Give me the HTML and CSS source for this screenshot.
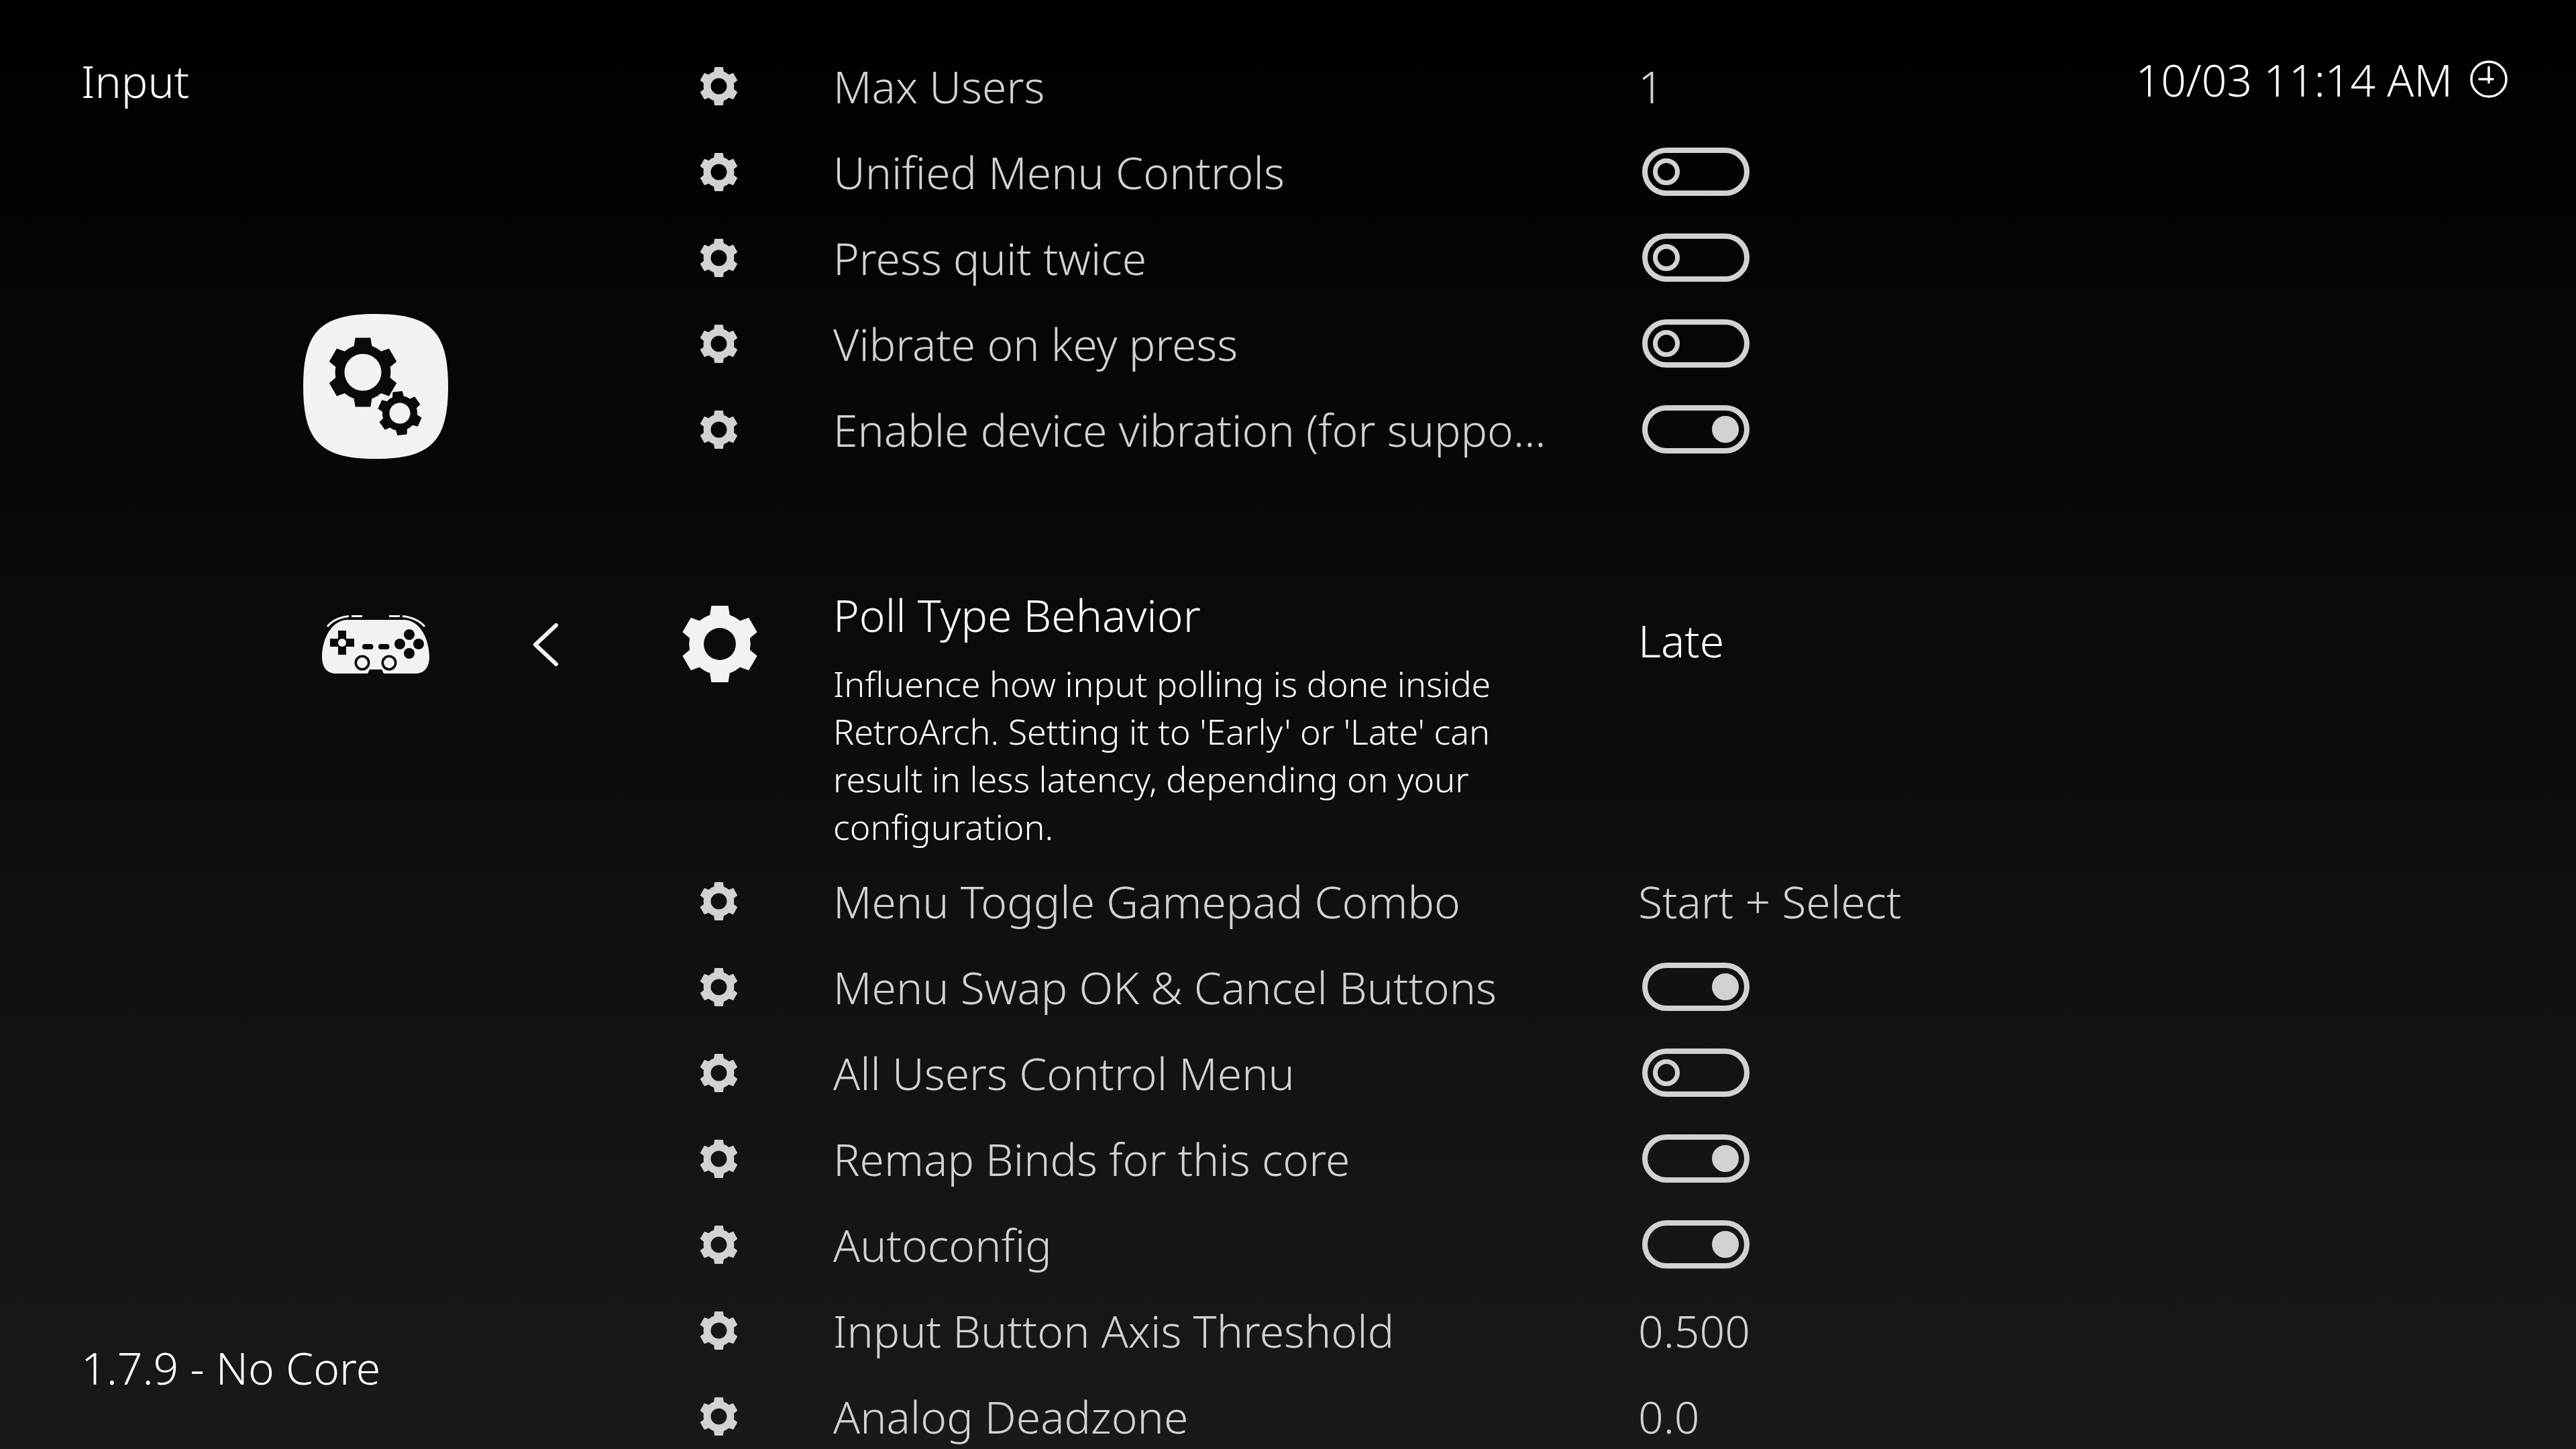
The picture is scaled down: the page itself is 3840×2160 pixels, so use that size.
FILE: index.html
```html
<!DOCTYPE html>
<html lang="en">
<head>
    <meta charset="UTF-8">
    <title>Input</title>
    <link rel="stylesheet" href="styles.css">
</head>
<body>

    <!-- reusable gear -->
    <svg class="defs" width="0" height="0">
        <defs>
            <path id="gear" fill-rule="evenodd" d="M-13 -38 L-11 -50 L11 -50 L13 -38 A40 40 0 0 1 26.4 -30.3 L37.8 -34.5 L48.8 -15.5 L39.4 -7.7 A40 40 0 0 1 39.4 7.7 L48.8 15.5 L37.8 34.5 L26.4 30.3 A40 40 0 0 1 13 38 L11 50 L-11 50 L-13 38 A40 40 0 0 1 -26.4 30.3 L-37.8 34.5 L-48.8 15.5 L-39.4 7.7 A40 40 0 0 1 -39.4 -7.7 L-48.8 -15.5 L-37.8 -34.5 L-26.4 -30.3 A40 40 0 0 1 -13 -38 Z M0 -21 A21 21 0 1 0 0 21 A21 21 0 1 0 0 -21 Z"/>
        </defs>
    </svg>

    <div class="screen">

        <!-- Left side -->
        <aside class="side">
            <div class="side-title">Input</div>

            <div class="app-icon">
                <svg viewBox="0 0 216 216" width="216" height="216">
                    <path d="M108 0 C190 0 216 26 216 108 C216 190 190 216 108 216 C26 216 0 190 0 108 C0 26 26 0 108 0 Z" fill="#f2f2f2"/>
                    <use href="#gear" transform="translate(89 87) scale(1.03)" fill="#0a0a0a"/>
                    <circle cx="89" cy="87" r="27.500" fill="#f2f2f2"/>
                    <use href="#gear" transform="translate(144 148) rotate(-6) scale(0.65)" fill="#0a0a0a"/>
                    <circle cx="144" cy="148" r="15.500" fill="#f2f2f2"/>
                </svg>
            </div>

            <div class="side-nav">
                <svg class="pad" viewBox="0 0 160 88" width="160" height="88">
                    <path d="M8 17 Q18 4 40 1.500 M44 1.500 H60 M100 1.500 H116 M120 1.500 Q142 4 153 17" fill="none" stroke="#f2f2f2" stroke-width="3"/>
                    <path d="M38 7 H122 C146 7 160 36 160 62 C160 78 152 87 140 87 H92 L89 81 H71 L68 87 H20 C8 87 0 78 0 62 C0 36 14 7 38 7 Z" fill="#f2f2f2"/>
                    <path d="M24 23 H36 V35 H48 V47 H36 V59 H24 V47 H12 V35 H24 Z" fill="#0a0a0a"/>
                    <circle cx="30" cy="41" r="6" fill="#f2f2f2"/>
                    <rect x="60" y="43" width="16.500" height="8" rx="4" fill="#0a0a0a"/>
                    <rect x="84" y="43" width="16.500" height="8" rx="4" fill="#0a0a0a"/>
                    <circle cx="116" cy="43" r="8" fill="#0a0a0a"/>
                    <circle cx="144" cy="43" r="8" fill="#0a0a0a"/>
                    <circle cx="130" cy="29" r="8" fill="#0a0a0a"/>
                    <circle cx="130" cy="57" r="8" fill="#0a0a0a"/>
                    <circle cx="60" cy="71" r="9.700" fill="#f2f2f2" stroke="#0a0a0a" stroke-width="3.600"/>
                    <circle cx="100" cy="71" r="9.700" fill="#f2f2f2" stroke="#0a0a0a" stroke-width="3.600"/>
                </svg>
                <svg class="chevron" viewBox="0 0 38 64" width="38" height="64">
                    <path d="M34 3 L3 32 L34 61" fill="none" stroke="#f2f2f2" stroke-width="6" stroke-linecap="round" stroke-linejoin="round"/>
                </svg>
            </div>

            <div class="side-version">1.7.9 - No Core</div>
        </aside>

        <!-- Settings list -->
        <main class="list">
            <div class="row">
                <svg class="row-icon" viewBox="-50 -50 100 100"><use href="#gear"/></svg>
                <span class="row-label">Max Users</span>
                <span class="row-value">1</span>
            </div>
            <div class="row">
                <svg class="row-icon" viewBox="-50 -50 100 100"><use href="#gear"/></svg>
                <span class="row-label">Unified Menu Controls</span>
                <span class="toggle"></span>
            </div>
            <div class="row">
                <svg class="row-icon" viewBox="-50 -50 100 100"><use href="#gear"/></svg>
                <span class="row-label">Press quit twice</span>
                <span class="toggle"></span>
            </div>
            <div class="row">
                <svg class="row-icon" viewBox="-50 -50 100 100"><use href="#gear"/></svg>
                <span class="row-label">Vibrate on key press</span>
                <span class="toggle"></span>
            </div>
            <div class="row">
                <svg class="row-icon" viewBox="-50 -50 100 100"><use href="#gear"/></svg>
                <span class="row-label">Enable device vibration (for suppo...</span>
                <span class="toggle on"></span>
            </div>

            <!-- Selected item -->
            <div class="row selected">
                <svg class="row-icon" viewBox="-50 -50 100 100"><use href="#gear"/></svg>
                <div class="row-text">
                    <span class="row-label">Poll Type Behavior</span>
                    <p class="row-desc">Influence how input polling is done inside<br>RetroArch. Setting it to 'Early' or 'Late' can<br>result in less latency, depending on your<br>configuration.</p>
                </div>
                <span class="row-value">Late</span>
            </div>

            <div class="row">
                <svg class="row-icon" viewBox="-50 -50 100 100"><use href="#gear"/></svg>
                <span class="row-label">Menu Toggle Gamepad Combo</span>
                <span class="row-value">Start + Select</span>
            </div>
            <div class="row">
                <svg class="row-icon" viewBox="-50 -50 100 100"><use href="#gear"/></svg>
                <span class="row-label">Menu Swap OK &amp; Cancel Buttons</span>
                <span class="toggle on"></span>
            </div>
            <div class="row">
                <svg class="row-icon" viewBox="-50 -50 100 100"><use href="#gear"/></svg>
                <span class="row-label">All Users Control Menu</span>
                <span class="toggle"></span>
            </div>
            <div class="row">
                <svg class="row-icon" viewBox="-50 -50 100 100"><use href="#gear"/></svg>
                <span class="row-label">Remap Binds for this core</span>
                <span class="toggle on"></span>
            </div>
            <div class="row">
                <svg class="row-icon" viewBox="-50 -50 100 100"><use href="#gear"/></svg>
                <span class="row-label">Autoconfig</span>
                <span class="toggle on"></span>
            </div>
            <div class="row">
                <svg class="row-icon" viewBox="-50 -50 100 100"><use href="#gear"/></svg>
                <span class="row-label">Input Button Axis Threshold</span>
                <span class="row-value">0.500</span>
            </div>
            <div class="row">
                <svg class="row-icon" viewBox="-50 -50 100 100"><use href="#gear"/></svg>
                <span class="row-label">Analog Deadzone</span>
                <span class="row-value">0.0</span>
            </div>
        </main>

        <!-- Clock -->
        <div class="clock">
            <span>10/03 11:14 AM</span>
            <svg viewBox="0 0 56 56" width="56" height="56">
                <circle cx="28" cy="28" r="26" fill="none" stroke="#fff" stroke-width="3.500"/>
                <path d="M28 10 V33 M14 28 H34" fill="none" stroke="#fff" stroke-width="3.500" stroke-linecap="round"/>
            </svg>
        </div>
    </div>

</body>
</html>
```

FILE: styles.css
```css
body {
    margin: 0;
    background-color: #000;
    font-family: 'Noto Sans', sans-serif;
    font-weight: 300;
    color: #d2d2d2;
}

.defs {
    position: absolute;
}

.screen {
    width: 3840px;
    height: 2160px;
    display: flex;
    overflow: hidden;
    background: linear-gradient(to bottom, #000 0%, #191919 100%);
}

/* Left side */
.side {
    width: 1000px;
    height: 2160px;
    flex-shrink: 0;
    position: relative;
    color: #fff;
    font-size: 66px;
}

.side-title {
    padding: 72px 0 0 121px;
    line-height: 96px;
}

.app-icon {
    margin: 300px 0 0 452px;
    height: 216px;
}

.side-nav {
    display: flex;
    align-items: center;
    margin: 233px 0 0 480px;
    height: 88px;
}

.side-nav .chevron {
    margin-left: 155px;
}

.side-version {
    position: absolute;
    left: 121px;
    top: 1990px;
    line-height: 96px;
}

/* Settings list */
.list {
    width: 2000px;
    flex-shrink: 0;
    padding-top: 64px;
}

.row {
    display: flex;
    align-items: center;
    height: 128px;
    font-size: 66px;
    color: #d2d2d2;
}

.row-icon {
    width: 57px;
    height: 57px;
    margin-left: 43px;
    margin-right: 142px;
    flex-shrink: 0;
    fill: #d2d2d2;
}

.row-label {
    width: 1200px;
    flex-shrink: 0;
    white-space: nowrap;
}

.row-value {
    flex-shrink: 0;
    white-space: nowrap;
}

.toggle {
    width: 160px;
    height: 72px;
    box-sizing: border-box;
    margin-left: 6px;
    border: 8px solid #d2d2d2;
    border-radius: 36px;
    position: relative;
}

.toggle::after {
    content: "";
    position: absolute;
    left: 8px;
    top: 8px;
    width: 40px;
    height: 40px;
    box-sizing: border-box;
    border: 7px solid #d2d2d2;
    border-radius: 50%;
}

.toggle.on::after {
    left: auto;
    right: 8px;
    background-color: #d2d2d2;
}

/* Selected item */
.row.selected {
    height: auto;
    align-items: flex-start;
    margin-top: 164px;
    padding-bottom: 12px;
    color: #fff;
}

.row.selected .row-icon {
    width: 114px;
    height: 114px;
    margin-left: 16px;
    margin-right: 112px;
    margin-top: 35px;
    fill: #f2f2f2;
}

.row-text {
    width: 1200px;
    flex-shrink: 0;
}

.row.selected .row-label {
    display: block;
    line-height: 96px;
}

.row.selected .row-value {
    margin-top: 41px;
}

.row-desc {
    margin: 19px 0 0;
    font-size: 52px;
    line-height: 71px;
}

/* Clock */
.clock {
    position: absolute;
    right: 102px;
    top: 70px;
    display: flex;
    align-items: center;
    gap: 26px;
    font-size: 66px;
    line-height: 96px;
    color: #fff;
}
```
